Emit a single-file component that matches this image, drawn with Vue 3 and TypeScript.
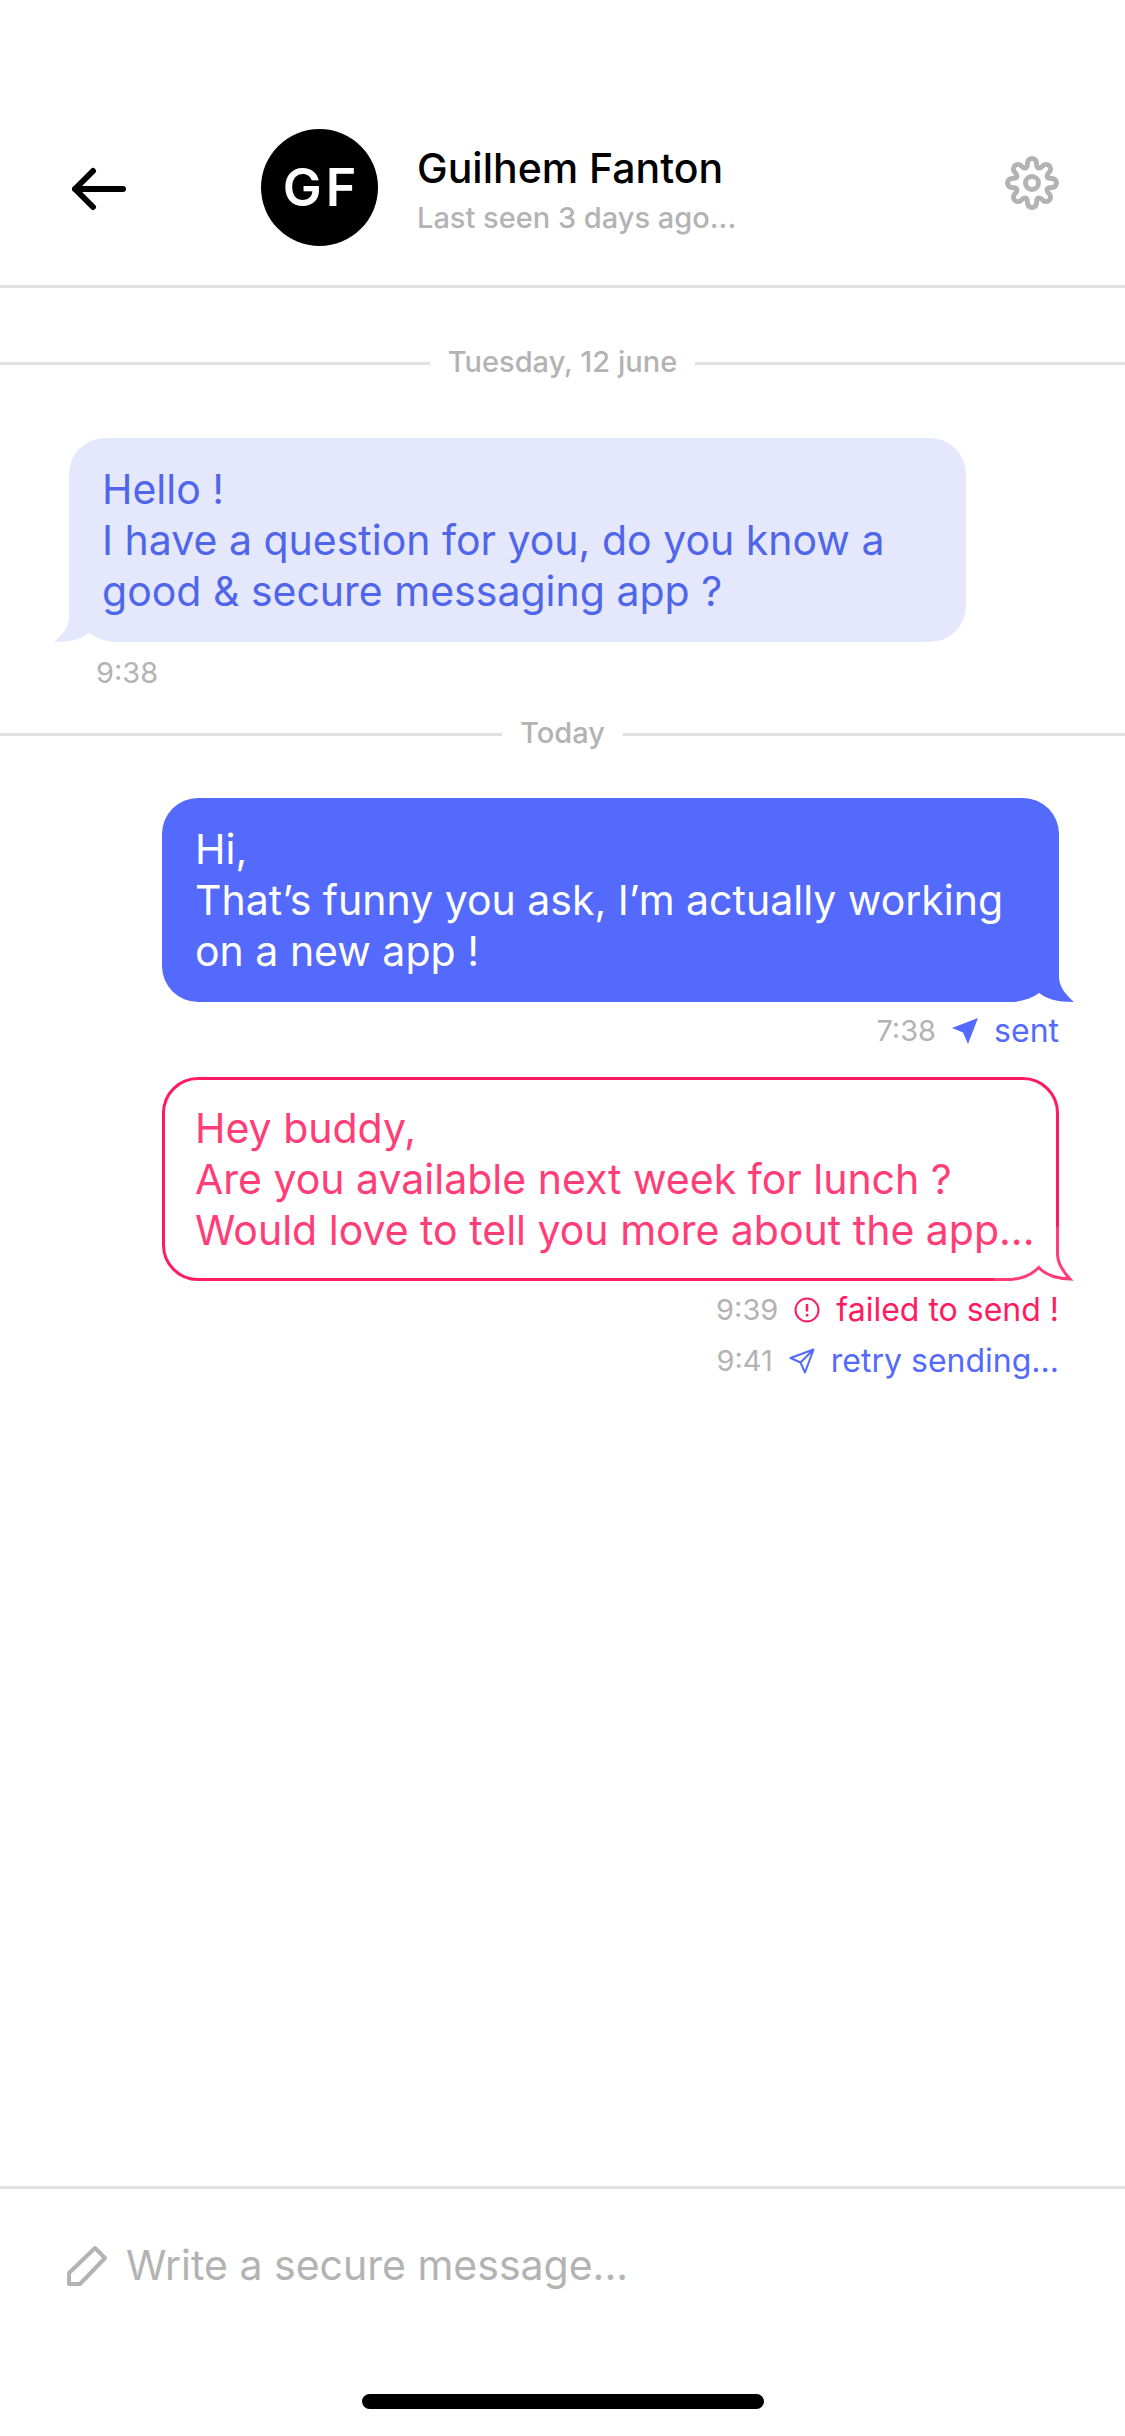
<script setup lang="ts">
import { ref } from 'vue'

type Delivery = 'sent' | 'failed' | 'retry'

interface Status {
  time: string
  kind?: Delivery
  label?: string
}

interface Message {
  id: number
  tone: 'received' | 'sent' | 'failed'
  text: string
  statuses: Status[]
}

interface Day {
  label: string
  messages: Message[]
}

const draft = ref('')

const initials = ['G', 'F']

const days: Day[] = [
  {
    label: 'Tuesday, 12 june',
    messages: [
      {
        id: 1,
        tone: 'received',
        text: 'Hello !\nI have a question for you, do you know a\ngood & secure messaging app ?',
        statuses: [{ time: '9:38' }],
      },
    ],
  },
  {
    label: 'Today',
    messages: [
      {
        id: 2,
        tone: 'sent',
        text: 'Hi,\nThat’s funny you ask, I’m actually working\non a new app !',
        statuses: [{ time: '7:38', kind: 'sent', label: 'sent' }],
      },
      {
        id: 3,
        tone: 'failed',
        text: 'Hey buddy,\nAre you available next week for lunch ?\nWould love to tell you more about the app...',
        statuses: [
          { time: '9:39', kind: 'failed', label: 'failed to send !' },
          { time: '9:41', kind: 'retry', label: 'retry sending...' },
        ],
      },
    ],
  },
]

// Eight rounded teeth around the origin, each joined to the next by a soft valley.
function gearOutline(): string {
  const at = (tooth: number, x: number, y: number): string => {
    const a = (tooth * Math.PI) / 4
    const px = x * Math.cos(a) - y * Math.sin(a)
    const py = x * Math.sin(a) + y * Math.cos(a)
    return `${px.toFixed(2)} ${py.toFixed(2)}`
  }
  let d = `M${at(0, -4.5, -20)}`
  for (let i = 0; i < 8; i++) {
    d += `A4.5 4.5 0 0 1 ${at(i, 4.5, -20)}`
    d += `C${at(i, 4.5, -14.5)} ${at(i + 1, -4.5, -14.5)} ${at(i + 1, -4.5, -20)}`
  }
  return d + 'Z'
}

const gear = gearOutline()
</script>

<template>
  <div class="screen">
    <header class="header">
      <button class="icon-button back" type="button" aria-label="Back">
        <svg width="54" height="54" viewBox="0 0 54 54" fill="none" stroke="currentColor" stroke-width="6" stroke-linecap="round" stroke-linejoin="round">
          <path d="M51 28H3M21 10L3 28l18 18" />
        </svg>
      </button>
      <div class="avatar">
        <span v-for="initial in initials" :key="initial">{{ initial }}</span>
      </div>
      <div class="contact">
        <h1 class="name">Guilhem Fanton</h1>
        <p class="seen">Last seen 3 days ago...</p>
      </div>
      <button class="icon-button settings" type="button" aria-label="Settings">
        <svg width="54" height="54" viewBox="-27 -27 54 54" fill="none" stroke="currentColor" stroke-width="5">
          <circle r="6.5" />
          <path :d="gear" />
        </svg>
      </button>
    </header>

    <main class="thread">
      <section v-for="day in days" :key="day.label" class="day">
        <h2 class="divider">{{ day.label }}</h2>
        <article v-for="message in day.messages" :key="message.id" class="message" :class="message.tone">
          <div class="bubble">
            <svg v-if="message.tone === 'failed'" class="tail" width="80" height="54" viewBox="0 0 80 54">
              <path d="M0 0H80V54H0Z" fill="#fff" />
              <path
                d="M63.500 0V27C63.500 36 69 44.500 76 52C62 51.500 51 47.500 44.700 40.500C38 47.500 30 51.500 17 52.500H0"
                fill="none"
                stroke="currentColor"
                stroke-width="3"
              />
            </svg>
            <svg v-else class="tail" width="80" height="54" viewBox="0 0 80 54" fill="currentColor">
              <path d="M44.700 0H65V29C65 38 71 46 80 54C63 54 52 51 44.700 44.500Z" />
            </svg>
            <p class="text">{{ message.text }}</p>
          </div>
          <div class="statuses">
            <div v-for="status in message.statuses" :key="status.time" class="status" :class="status.kind">
              <time class="time">{{ status.time }}</time>
              <svg v-if="status.kind === 'sent'" width="26" height="26" viewBox="0 0 26 26">
                <path d="M0 10L26 0L16 26L11 14.500Z" fill="currentColor" />
              </svg>
              <svg v-else-if="status.kind === 'failed'" width="26" height="26" viewBox="0 0 26 26" fill="none" stroke="currentColor" stroke-width="2">
                <circle cx="13" cy="13" r="11.500" />
                <path d="M13 7V14.500M13 17V19.500" stroke-width="2.500" />
              </svg>
              <svg v-else-if="status.kind === 'retry'" width="26" height="26" viewBox="0 0 26 26" fill="none" stroke="currentColor" stroke-width="2" stroke-linejoin="round">
                <path d="M1.500 10L24.500 1.500L16 24.500L11.500 14.500ZM11.500 14.500L24.500 1.500" />
              </svg>
              <button v-if="status.kind === 'retry'" class="label" type="button">{{ status.label }}</button>
              <span v-else-if="status.label" class="label">{{ status.label }}</span>
            </div>
          </div>
        </article>
      </section>
    </main>

    <footer class="composer">
      <label class="field">
        <svg width="42" height="42" viewBox="0 0 42 42" fill="none" stroke="currentColor" stroke-width="4" stroke-linejoin="round">
          <path d="M29 3L39 13L14 39H3V28Z" />
        </svg>
        <input v-model="draft" class="input" type="text" aria-label="Message" placeholder="Write a secure message..." />
      </label>
      <div class="home-bar"></div>
    </footer>
  </div>
</template>

<style>
body {
  margin: 0;
  background: #fff;
}
</style>

<style scoped>
.screen {
  display: flex;
  flex-direction: column;
  box-sizing: border-box;
  min-height: 100vh;
  overflow-x: hidden;
  background: #fff;
  color: #b3b3b3;
  font-family: Inter, "Liberation Sans", sans-serif;
}

h1,
h2,
p {
  margin: 0;
  font-weight: inherit;
}

button,
input {
  padding: 0;
  border: 0;
  background: none;
  font: inherit;
  color: inherit;
}

svg {
  display: block;
  flex: none;
}

.header {
  display: flex;
  align-items: center;
  padding: 129px 66px 39px 72px;
  border-bottom: 3px solid #e1e1e1;
}

.icon-button {
  flex: none;
  width: 54px;
  height: 108px;
  cursor: pointer;
}

.back {
  color: #000;
}

.settings {
  align-self: flex-start;
}

.avatar {
  display: flex;
  flex: none;
  align-items: center;
  justify-content: center;
  gap: 4px;
  width: 117px;
  height: 117px;
  margin-left: 135px;
  border-radius: 50%;
  background: #000;
  color: #fff;
  font-size: 52px;
  font-weight: 600;
  line-height: 64px;
}

.contact {
  display: flex;
  flex: 1;
  flex-direction: column;
  gap: 6px;
  padding: 3px 0 0 39px;
}

.name {
  color: #000;
  font-size: 41px;
  font-weight: 500;
  line-height: 51px;
}

.seen {
  font-size: 29px;
  font-weight: 500;
  line-height: 36px;
}

.thread {
  flex: 1;
  padding-top: 56px;
}

.day {
  margin-bottom: 17px;
}

.divider {
  display: flex;
  align-items: center;
  gap: 18px;
  margin-bottom: 47px;
  font-size: 29px;
  font-weight: 500;
  line-height: 36px;
}

.day:first-child .divider {
  margin-bottom: 58px;
}

.divider::before,
.divider::after {
  flex: 1;
  height: 3px;
  margin-top: 2px;
  background: #e1e1e1;
  content: "";
}

.message {
  display: flex;
  flex-direction: column;
  align-items: flex-end;
  padding: 0 66px 0 69px;
}

.message + .message {
  margin-top: 21px;
}

.received {
  align-items: flex-start;
}

.bubble {
  position: relative;
  box-sizing: border-box;
  width: 100%;
  max-width: 897px;
  padding: 26px 15px 25px 33px;
  border-radius: 36px 36px 48px 36px;
}

.received .bubble {
  border-radius: 36px 36px 36px 48px;
  background: #e5e8fd;
  color: #5066ea;
}

.sent .bubble {
  background: #536afd;
  color: #fff;
}

.failed .bubble {
  padding: 23px 12px 22px 30px;
  border: 3px solid #ff1b61;
  color: #ff3d77;
}

.tail {
  position: absolute;
  right: -15px;
  bottom: 0;
}

.received .tail {
  right: auto;
  left: -15px;
  transform: scaleX(-1);
  color: #e5e8fd;
}

.sent .tail {
  color: #536afd;
}

.failed .tail {
  right: -18px;
  bottom: -3px;
}

.text {
  position: relative;
  font-size: 41px;
  line-height: 51px;
  white-space: pre-line;
}

.statuses {
  padding-top: 3px;
}

.received .statuses {
  padding-top: 5px;
  padding-left: 27px;
}

.status {
  display: flex;
  align-items: center;
  justify-content: flex-end;
  gap: 16px;
  height: 51px;
  font-size: 29px;
  line-height: 36px;
}

.label {
  font-size: 32px;
}

button.label {
  cursor: pointer;
}

.status.sent,
.status.retry {
  color: #536afd;
}

.status.failed {
  color: #ff1b61;
}

.time {
  color: #b3b3b3;
}

.composer {
  display: flex;
  flex-direction: column;
  padding: 51px 66px 27px;
  border-top: 3px solid #e1e1e1;
}

.field {
  display: flex;
  align-items: center;
  gap: 18px;
}

.input {
  flex: 1;
  min-width: 0;
  height: 51px;
  outline: 0;
  font-size: 41px;
  line-height: 51px;
}

.input::placeholder {
  color: #b3b3b3;
  opacity: 1;
}

.home-bar {
  align-self: center;
  width: 402px;
  max-width: 100%;
  height: 15px;
  margin-top: 103px;
  border-radius: 8px;
  background: #000;
}
</style>
